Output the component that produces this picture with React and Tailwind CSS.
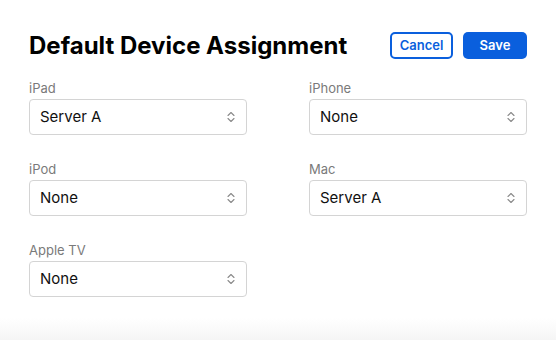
import React from "react";

const fields = [
  { label: "iPad", value: "Server A" },
  { label: "iPhone", value: "None" },
  { label: "iPod", value: "None" },
  { label: "Mac", value: "Server A" },
  { label: "Apple TV", value: "None" },
];

function UpDown() {
  return (
    <svg width="8" height="12" viewBox="0 0 8 12" fill="none" className="shrink-0">
      <path d="M1 4.5 L4 1.5 L7 4.5" stroke="#8a8a8a" strokeWidth="1.1" strokeLinecap="round" strokeLinejoin="round" />
      <path d="M1 7.5 L4 10.5 L7 7.5" stroke="#8a8a8a" strokeWidth="1.1" strokeLinecap="round" strokeLinejoin="round" />
    </svg>
  );
}

function Field({ label, value }) {
  return (
    <div className="flex flex-col">
      <span className="text-[13px] leading-[16px] text-[#7a7a7a]">{label}</span>
      <div className="mt-[3px] h-[36px] flex items-center justify-between pl-[10px] pr-[11px] border border-[#d4d4d4] rounded-[4px] bg-white">
        <span className="text-[15px] text-[#111]">{value}</span>
        <UpDown />
      </div>
    </div>
  );
}

export default function App() {
  return (
    <div
      className="w-[556px] h-[340px] bg-white flex flex-col"
      style={{ fontFamily: "Inter, 'Liberation Sans', sans-serif" }}
    >
      <div className="px-[29px] pt-[32px]">
        {/* header */}
        <div className="flex items-center justify-between h-[27px]">
          <h1 className="text-[24px] font-bold text-black">Default Device Assignment</h1>
          <div className="flex items-center gap-[10px]">
            <button className="h-[27px] w-[63px] rounded-[5px] border-2 border-[#0a5fdd] text-[#0a5fdd] text-[13px] font-semibold flex items-center justify-center">
              Cancel
            </button>
            <button className="h-[27px] w-[64px] rounded-[5px] bg-[#0a5fdd] text-white text-[13px] font-semibold flex items-center justify-center">
              Save
            </button>
          </div>
        </div>

        {/* fields */}
        <div className="mt-[21px] grid grid-cols-2 gap-x-[62px] gap-y-[26px]">
          {fields.map((f) => (
            <Field key={f.label} label={f.label} value={f.value} />
          ))}
        </div>
      </div>

      <div className="mt-auto h-[22px] bg-gradient-to-b from-white to-[#f5f5f5]" />
    </div>
  );
}
